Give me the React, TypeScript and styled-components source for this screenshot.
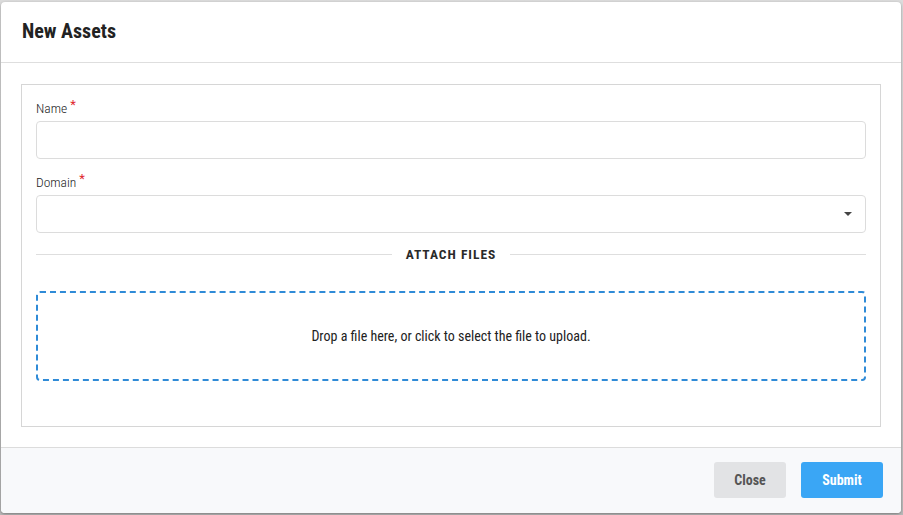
import React from "react";
import styled, { createGlobalStyle } from "styled-components";

const Global = createGlobalStyle`
  html, body { margin: 0; padding: 0; }
  body {
    width: 903px;
    height: 515px;
    overflow: hidden;
    background: #c4c6c8;
    font-family: "Roboto Condensed", Roboto, "Liberation Sans", sans-serif;
    font-stretch: condensed;
  }
  * { box-sizing: border-box; }
`;

const Backdrop = styled.div`
  width: 903px;
  height: 515px;
  padding: 2px 2px 2px 1px;
  background: linear-gradient(#dcdcdc, #b9b9b9);
`;

const Modal = styled.div`
  width: 900px;
  height: 511px;
  background: #fff;
  border-radius: 4px;
  display: flex;
  flex-direction: column;
  overflow: hidden;
  box-shadow: 0 1px 3px rgba(0, 0, 0, 0.35);
`;

const Header = styled.div`
  height: 61px;
  flex: none;
  display: flex;
  align-items: center;
  padding: 0 21px;
  border-bottom: 1px solid #dedede;
`;

const Title = styled.h2`
  margin: 0;
  font-size: 20px;
  font-weight: 700;
  color: #222;
  padding-bottom: 2px;
`;

const Body = styled.div`
  flex: 1;
  padding: 21px 20px 20px 20px;
`;

const Fieldset = styled.div`
  height: 343px;
  border: 1px solid #d6d6d6;
  padding: 12px 14px 0 14px;
  display: flex;
  flex-direction: column;
`;

const Label = styled.label`
  display: block;
  font-size: 13.5px;
  font-weight: 300;
  color: #222;
  height: 24px;
  line-height: 16px;
`;

const Star = styled.span`
  color: #e0262d;
  margin-left: 3px;
  font-size: 13px;
  font-weight: 400;
  vertical-align: 4px;
`;

const Field = styled.div`
  position: relative;
  height: 38px;
  flex: none;
  border: 1px solid #dcdcdc;
  border-radius: 4px;
  margin-bottom: 12px;
`;

const Caret = styled.span`
  position: absolute;
  right: 13px;
  top: 16px;
  width: 0;
  height: 0;
  border-left: 4px solid transparent;
  border-right: 4px solid transparent;
  border-top: 4px solid #444;
`;

const Divider = styled.div`
  display: flex;
  align-items: center;
  gap: 14px;
  height: 18px;
  flex: none;
  margin-bottom: 28px;
  &::before, &::after {
    content: "";
    flex: 1;
    height: 1px;
    background: #dedede;
  }
`;

const DividerText = styled.span`
  font-size: 13.5px;
  font-weight: 700;
  letter-spacing: 1px;
  color: #2a2a2a;
`;

const Drop = styled.div`
  height: 90px;
  flex: none;
  border: 2px dashed #2f8bd7;
  border-radius: 4px;
  display: flex;
  align-items: center;
  justify-content: center;
  font-size: 14px;
  color: #222;
`;

const Footer = styled.div`
  height: 66px;
  flex: none;
  background: #f8f9fb;
  border-top: 1px solid #dcdcdc;
  display: flex;
  justify-content: flex-end;
  align-items: center;
  gap: 15px;
  padding: 0 18px 1px 0;
`;

const Button = styled.button<{ $primary?: boolean }>`
  height: 36px;
  border: none;
  border-radius: 3px;
  font-family: inherit;
  font-stretch: condensed;
  font-size: 14px;
  font-weight: 700;
  cursor: pointer;
  width: ${(p) => (p.$primary ? "82px" : "72px")};
  background: ${(p) => (p.$primary ? "#3aa6f5" : "#e2e3e5")};
  color: ${(p) => (p.$primary ? "#fff" : "#555")};
`;

export default function App() {
  return (
    <>
      <Global />
      <Backdrop>
        <Modal>
          <Header>
            <Title>New Assets</Title>
          </Header>
          <Body>
            <Fieldset>
              <Label>
                Name<Star>*</Star>
              </Label>
              <Field />
              <Label>
                Domain<Star>*</Star>
              </Label>
              <Field>
                <Caret />
              </Field>
              <Divider>
                <DividerText>ATTACH FILES</DividerText>
              </Divider>
              <Drop>Drop a file here, or click to select the file to upload.</Drop>
            </Fieldset>
          </Body>
          <Footer>
            <Button>Close</Button>
            <Button $primary>Submit</Button>
          </Footer>
        </Modal>
      </Backdrop>
    </>
  );
}
